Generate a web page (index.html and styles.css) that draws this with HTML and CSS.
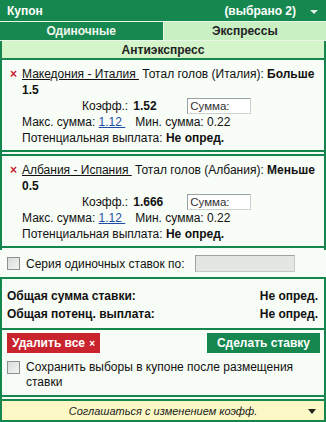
FILE: index.html
```html
<!DOCTYPE html>
<html lang="ru">
<head>
<meta charset="utf-8">
<link rel="stylesheet" href="styles.css">
</head>
<body>
<div class="coupon">
  <div class="head">
    <span class="title">Купон</span>
    <span class="sel">(выбрано 2)</span>
    <span class="arrow"></span>
  </div>
  <div class="tabs">
    <div class="tab active">Одиночные</div>
    <div class="tab">Экспрессы</div>
  </div>
  <div class="anti">Антиэкспресс</div>

  <div class="bet">
    <div class="line"><span class="x">×</span><span class="ev">Македония - Италия&nbsp;</span> Тотал голов (Италия): <b>Больше 1.5</b></div>
    <div class="odds"><span class="olab">Коэфф.:</span><b class="oval">1.52</b><span class="sum">Сумма:</span></div>
    <div class="row">Макс. сумма: <a class="lnk">1.12&nbsp;</a>&nbsp;&nbsp; Мин. сумма: 0.22</div>
    <div class="row">Потенциальная выплата: <b>Не опред.</b></div>
  </div>

  <div class="bet">
    <div class="line"><span class="x">×</span><span class="ev">Албания - Испания&nbsp;</span> Тотал голов (Албания): <b>Меньше 0.5</b></div>
    <div class="odds"><span class="olab">Коэфф.:</span><b class="oval">1.666</b><span class="sum">Сумма:</span></div>
    <div class="row">Макс. сумма: <a class="lnk">1.12&nbsp;</a>&nbsp;&nbsp; Мин. сумма: 0.22</div>
    <div class="row">Потенциальная выплата: <b>Не опред.</b></div>
  </div>

  <div class="series">
    <span class="cb"></span><span class="slab">Серия одиночных ставок по:</span><span class="sinput"></span>
  </div>

  <div class="totals">
    <div class="trow"><b>Общая сумма ставки:</b><b>Не опред.</b></div>
    <div class="trow"><b>Общая потенц. выплата:</b><b>Не опред.</b></div>
  </div>

  <div class="actions">
    <div class="btns">
      <span class="del">Удалить все <span class="dx">×</span></span>
      <span class="make">Сделать ставку</span>
    </div>
    <div class="keep"><span class="cb"></span><span>Сохранить выборы в купоне после размещения ставки</span></div>
  </div>

  <div class="foot">
    <span class="ftxt">Соглашаться с изменением коэфф.</span>
    <span class="farrow"></span>
  </div>
</div>
</body>
</html>
```

FILE: styles.css
```css
* { box-sizing: border-box; }
html, body { margin: 0; padding: 0; background: #fff; }
body {
  font-family: "Liberation Sans", Arial, sans-serif;
  font-size: 12px;
  color: #111;
  width: 326px;
  height: 422px;
  overflow: hidden;
}
.coupon {
  width: 326px;
  height: 422px;
  border-left: 2px solid #15864e;
  border-right: 2px solid #15864e;
  border-bottom: 2px solid #15864e;
  background: #f7fcf6;
  display: flex;
  flex-direction: column;
}
.head {
  height: 21px;
  background: #16884f;
  color: #fff;
  font-weight: bold;
  display: flex;
  align-items: center;
  padding: 0 8px 0 7px;
  margin: 0 -2px;
}
.title { flex: 1; }
.sel { margin-right: 14px; }
.arrow {
  width: 0; height: 0;
  border-left: 4px solid transparent;
  border-right: 4px solid transparent;
  border-top: 4px solid #dfeee5;
  margin-top: 2px;
}
.tabs {
  display: flex;
  border-top: 1px solid #e9f7ea;
  border-bottom: 1px solid #e9f7ea;
  margin: 0 -2px;
  height: 20px;
}
.tab {
  flex: 1;
  display: flex;
  align-items: center;
  justify-content: center;
  font-weight: bold;
  background: #c9f0c2;
  color: #222;
}
.tab.active {
  background: #17884f;
  color: #eef7ee;
  border-right: 1px solid #e9f7ea;
}
.anti {
  height: 17px;
  background: #d3f5c9;
  display: flex;
  align-items: center;
  justify-content: center;
  font-weight: bold;
  color: #222;
}
.bet {
  border: 2px solid #15864e;
  margin: 0 -2px 2px;
  padding: 6px 3px 4px 8px;
  background: #f8fdf7;
}
.line {
  line-height: 16px;
  padding-left: 12px;
  position: relative;
}
.x {
  position: absolute;
  left: 0;
  top: 0;
  color: #c8202a;
  font-weight: bold;
  font-size: 12px;
}
.ev { text-decoration: underline; }
.odds {
  display: flex;
  align-items: center;
  height: 16px;
  padding-left: 72px;
}
.olab { margin-right: 5px; }
.oval { width: 54px; }
.sum {
  width: 64px;
  height: 16px;
  background: #fff;
  border: 1px solid #cdd3cf;
  border-top-color: #9aa09c;
  border-left-color: #9aa09c;
  font-size: 11.5px;
  line-height: 14px;
  padding-left: 2px;
  color: #333;
}
.row {
  line-height: 16px;
  padding-left: 12px;
}
.lnk { color: #1b4fa6; text-decoration: underline; }
.series {
  display: flex;
  align-items: center;
  height: 29px;
  border-bottom: 2px solid #15864e;
  margin: 0 -2px;
  padding-left: 7px;
  background: #f8fdf7;
}
.cb {
  width: 13px;
  height: 13px;
  border: 1px solid #8c918e;
  background: linear-gradient(135deg, #d8dcd9, #f2f4f3);
  margin-right: 6px;
  flex: none;
}
.slab { margin-right: 10px; }
.sinput {
  width: 100px;
  height: 17px;
  background: #e4e6e4;
  border: 1px solid #c5c9c6;
  border-top-color: #9fa39f;
  border-left-color: #9fa39f;
}
.totals {
  padding: 8px 8px 5px 7px;
  border-bottom: 2px solid #15864e;
  margin: 0 -2px;
}
.trow {
  display: flex;
  justify-content: space-between;
  line-height: 18px;
}
.actions {
  padding: 3px 6px 5px 7px;
  margin: 0 -2px;
  border-bottom: 2px solid #15864e;
}
.btns {
  display: flex;
  justify-content: space-between;
  margin-bottom: 7px;
}
.del {
  background: #c9232d;
  color: #fff;
  font-weight: bold;
  font-size: 12px;
  height: 20px;
  line-height: 20px;
  padding: 0 5px 0 5px;
}
.dx { font-size: 10px; margin-left: 1px; }
.make {
  background: #16874f;
  color: #fff;
  font-weight: bold;
  height: 20px;
  line-height: 20px;
  padding: 0 10px;
}
.keep {
  display: flex;
  align-items: flex-start;
  line-height: 15px;
}
.keep .cb { margin-top: 1px; }
.foot {
  flex: 1;
  background: #fbf8c6;
  margin: 2px 0 0;
  border-top: 2px solid #15864e;
  display: flex;
  align-items: center;
  justify-content: center;
  position: relative;
  font-style: italic;
  font-size: 11px;
  color: #222;
}
.farrow {
  position: absolute;
  right: 8px;
  top: 50%;
  margin-top: -2px;
  width: 0; height: 0;
  border-left: 4px solid transparent;
  border-right: 4px solid transparent;
  border-top: 5px solid #222;
}
```
